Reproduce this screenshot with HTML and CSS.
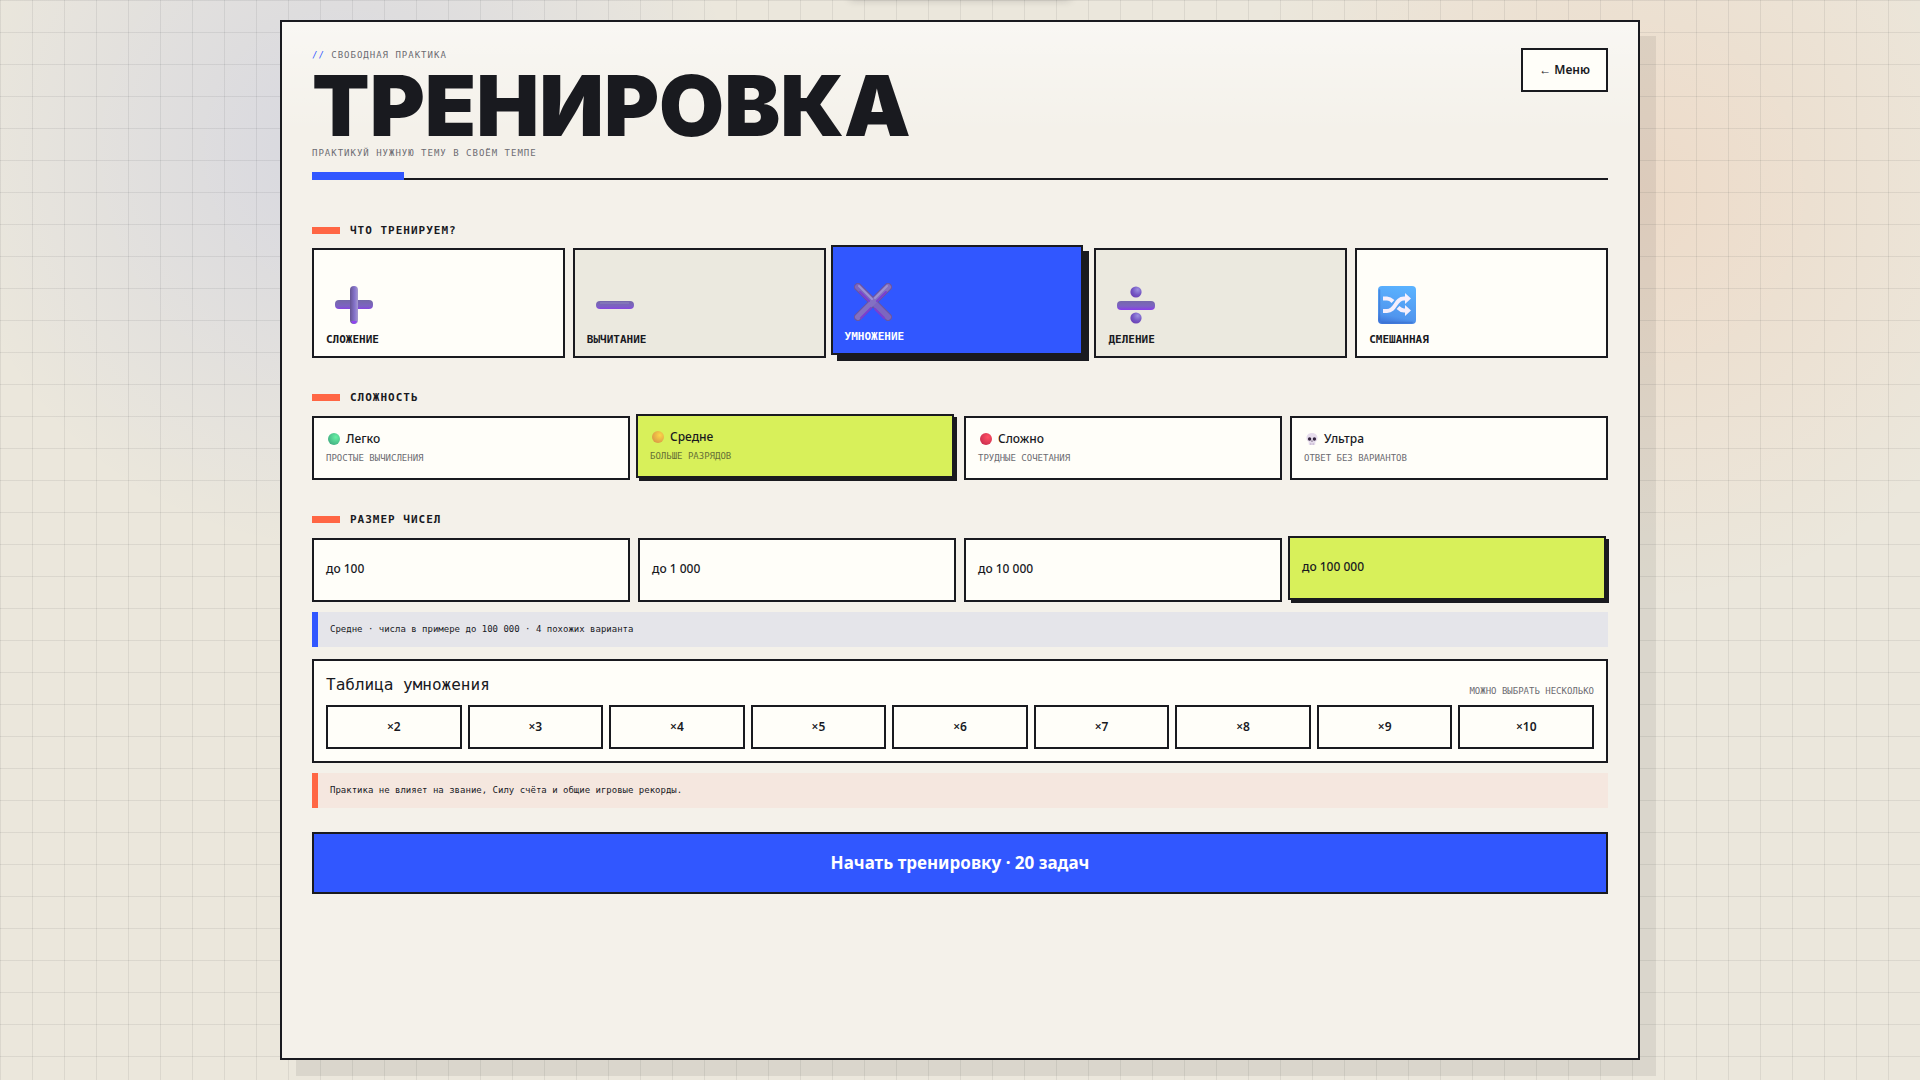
FILE: index.html
```html
<!DOCTYPE html>
<html lang="ru">
<head>
    <meta charset="UTF-8">
    <meta name="viewport" content="width=device-width, initial-scale=1.0">
    <title>Тренировка</title>
    <link rel="stylesheet" href="styles.css">
</head>
<body>
    <div class="toast" role="status"></div>

    <!-- Gradients shared by the icons -->
    <svg class="defs" width="0" height="0" aria-hidden="true">
        <defs>
            <linearGradient id="purple" gradientUnits="userSpaceOnUse" x1="0" y1="14" x2="0" y2="24">
                <stop offset="0" stop-color="#7468a8"/>
                <stop offset="0.6" stop-color="#7c63c0"/>
                <stop offset="1" stop-color="#8a3cec"/>
            </linearGradient>
            <linearGradient id="purpleV" x1="0" y1="0" x2="1" y2="0">
                <stop offset="0" stop-color="#655492"/>
                <stop offset="0.6" stop-color="#8674cc"/>
                <stop offset="1" stop-color="#a79bd0"/>
            </linearGradient>
            <radialGradient id="purpleDot" cx="0.65" cy="0.3" r="0.75">
                <stop offset="0" stop-color="#9c8fe0"/>
                <stop offset="0.6" stop-color="#7456c4"/>
                <stop offset="1" stop-color="#6a3fb4"/>
            </radialGradient>
            <linearGradient id="sky" x1="0.6" y1="0" x2="0.4" y2="1">
                <stop offset="0" stop-color="#5ab2ff"/>
                <stop offset="0.8" stop-color="#5196ee"/>
                <stop offset="1" stop-color="#3f78dc"/>
            </linearGradient>
            <radialGradient id="green" cx="0.65" cy="0.35" r="0.7">
                <stop offset="0" stop-color="#67f0a4"/>
                <stop offset="1" stop-color="#43b083"/>
            </radialGradient>
            <radialGradient id="yellow" cx="0.65" cy="0.35" r="0.7">
                <stop offset="0" stop-color="#fcd648"/>
                <stop offset="1" stop-color="#dc9a46"/>
            </radialGradient>
            <radialGradient id="red" cx="0.65" cy="0.35" r="0.7">
                <stop offset="0" stop-color="#ff5064"/>
                <stop offset="1" stop-color="#cc2f50"/>
            </radialGradient>
        </defs>
    </svg>

    <main class="panel">
        <header class="header">
            <div class="heading">
                <p class="eyebrow"><span class="slashes">//</span> Свободная практика</p>
                <h1>Тренировка</h1>
                <p class="subtitle">Практикуй нужную тему в своём темпе</p>
            </div>
            <button type="button" class="btn menu-btn">← Меню</button>
        </header>

        <section class="block">
            <h2>Что тренируем?</h2>
            <div class="topics">
                <button type="button" class="card topic">
                    <svg class="topic-icon" viewBox="0 0 38 38" aria-hidden="true">
                        <rect x="0" y="14" width="38" height="9" rx="4" fill="url(#purple)"/>
                        <rect x="15" y="0" width="8" height="38" rx="4" fill="url(#purpleV)"/>
                        <path d="M16 35h6q-1 3-3 3t-3-3z" fill="#8f45f0"/>
                    </svg>
                    <span>Сложение</span>
                </button>
                <button type="button" class="card topic">
                    <svg class="topic-icon" viewBox="0 0 38 38" aria-hidden="true">
                        <rect x="0" y="15" width="38" height="8" rx="4" fill="url(#purple)"/>
                        <path d="M4 17h29" stroke="#8d86bd" stroke-width="1"/>
                    </svg>
                    <span>Вычитание</span>
                </button>
                <button type="button" class="card topic selected" aria-pressed="true">
                    <svg class="topic-icon" viewBox="0 0 38 38" aria-hidden="true">
                        <path d="M4 4l30 30M34 4L4 34" stroke="#6a569f" stroke-width="8" stroke-linecap="round"/>
                        <path d="M4 4l30 30" stroke="#7c66c0" stroke-width="6" stroke-linecap="round"/>
                        <path d="M34 4L4 34" stroke="#8470c2" stroke-width="6" stroke-linecap="round"/>
                        <path d="M7 35l10-10M21 26l9 9M6 9l9 9M23 18l9-9" stroke="#7a3fd0" stroke-width="2" stroke-linecap="round"/>
                        <path d="M5 3l13 13M33 3L21 15" stroke="#9b92d2" stroke-width="2" stroke-linecap="round"/>
                    </svg>
                    <span>Умножение</span>
                </button>
                <button type="button" class="card topic">
                    <svg class="topic-icon" viewBox="0 0 38 38" aria-hidden="true">
                        <rect x="0" y="15" width="38" height="9" rx="4" fill="url(#purple)"/>
                        <circle cx="19" cy="6" r="5.600" fill="url(#purpleDot)"/>
                        <circle cx="19" cy="32" r="5.600" fill="url(#purpleDot)"/>
                    </svg>
                    <span>Деление</span>
                </button>
                <button type="button" class="card topic">
                    <svg class="topic-icon" viewBox="0 0 38 38" aria-hidden="true">
                        <rect width="38" height="38" rx="4" fill="url(#sky)"/>
                        <path d="M1.500 4v30M4 36.500h30" stroke="#3c72cf" stroke-width="1.500" stroke-linecap="round" opacity=".6"/>
                        <path d="M5 12.500h4q3 0 6 3M5 25h4c9 0 8-12.500 17-12.500h2M20 21.500q3 3 6 3h2" stroke="#f6effc" stroke-width="4" fill="none"/>
                        <path d="M27 7l6 5.500-6 5.500zM27 19l6 5.500-6 5.500z" fill="#f6effc"/>
                    </svg>
                    <span>Смешанная</span>
                </button>
            </div>
        </section>

        <section class="block">
            <h2>Сложность</h2>
            <div class="options">
                <button type="button" class="card option">
                    <span class="option-name"><svg class="dot" viewBox="0 0 12 12" aria-hidden="true"><circle cx="6" cy="6" r="6" fill="url(#green)"/></svg>Легко</span>
                    <small>Простые вычисления</small>
                </button>
                <button type="button" class="card option selected" aria-pressed="true">
                    <span class="option-name"><svg class="dot" viewBox="0 0 12 12" aria-hidden="true"><circle cx="6" cy="6" r="6" fill="url(#yellow)"/></svg>Средне</span>
                    <small>Больше разрядов</small>
                </button>
                <button type="button" class="card option">
                    <span class="option-name"><svg class="dot" viewBox="0 0 12 12" aria-hidden="true"><circle cx="6" cy="6" r="6" fill="url(#red)"/></svg>Сложно</span>
                    <small>Трудные сочетания</small>
                </button>
                <button type="button" class="card option">
                    <span class="option-name"><svg class="dot" viewBox="0 0 12 12" aria-hidden="true">
                        <path d="M6 0C2.500 0 .5 2.200.5 5c0 2 .8 3.200 2.200 3.600V11q0 1 1 1h4.600q1 0 1-1V8.600C10.700 8.200 11.500 7 11.500 5 11.500 2.200 9.500 0 6 0z" fill="#e6dcec"/>
                        <circle cx="3.600" cy="6" r="1.700" fill="#33243d"/>
                        <circle cx="8.400" cy="6" r="1.700" fill="#33243d"/>
                        <path d="M6 7l.8 1.500H5.200z" fill="#4b3a55"/>
                        <path d="M4.800 10v2M7.200 10v2" stroke="#b9a6c4" stroke-width=".7"/>
                    </svg>Ультра</span>
                    <small>Ответ без вариантов</small>
                </button>
            </div>
        </section>

        <section class="block">
            <h2>Размер чисел</h2>
            <div class="options">
                <button type="button" class="card option">до 100</button>
                <button type="button" class="card option">до 1 000</button>
                <button type="button" class="card option">до 10 000</button>
                <button type="button" class="card option selected" aria-pressed="true">до 100 000</button>
            </div>
        </section>

        <p class="note">Средне · числа в примере до 100 000 · 4 похожих варианта</p>

        <section class="tables">
            <div class="tables-head">
                <h3>Таблица умножения</h3>
                <small>Можно выбрать несколько</small>
            </div>
            <div class="tables-grid">
                <button type="button" class="btn">×2</button>
                <button type="button" class="btn">×3</button>
                <button type="button" class="btn">×4</button>
                <button type="button" class="btn">×5</button>
                <button type="button" class="btn">×6</button>
                <button type="button" class="btn">×7</button>
                <button type="button" class="btn">×8</button>
                <button type="button" class="btn">×9</button>
                <button type="button" class="btn">×10</button>
            </div>
        </section>

        <p class="note note-warn">Практика не влияет на звание, Силу счёта и общие игровые рекорды.</p>

        <button type="button" class="start-btn">Начать тренировку · 20 задач</button>
    </main>
</body>
</html>
```
FILE: styles.css
```css
:root {
    --ink: #191a1f;
    --paper: #f4f1ea;
    --card: #fffef9;
    --muted: #6c6c72;
    --blue: #3157ff;
    --orange: #ff6644;
    --lime: #d8f05a;
    --mono: "DejaVu Sans Mono", monospace;
    --sans: "Noto Sans", sans-serif;
}

* {
    box-sizing: border-box;
}

body {
    margin: 0;
    padding: 20px;
    min-height: 100vh;
    color: var(--ink);
    font-family: var(--mono);
    background:
        linear-gradient(rgba(25, 26, 31, 0.08) 1px, transparent 1px) 0 0 / 32px 32px,
        linear-gradient(90deg, rgba(25, 26, 31, 0.08) 1px, transparent 1px) 0 0 / 32px 32px,
        radial-gradient(circle at 18% 14%, rgba(49, 87, 255, 0.11), transparent 22%),
        radial-gradient(circle at 85% 18%, rgba(255, 136, 70, 0.13), transparent 22%),
        #ebe7dc;
}

h1, h2, h3, p {
    margin: 0;
}

button {
    color: inherit;
    font-family: var(--sans);
    cursor: pointer;
}

.defs {
    position: absolute;
}

.toast {
    position: absolute;
    bottom: 100%;
    left: 50%;
    width: 220px;
    height: 40px;
    transform: translateX(-50%);
    box-shadow: 0 0 8px rgba(25, 26, 31, 0.2);
}

.panel {
    max-width: 1360px;
    min-height: calc(100vh - 40px);
    margin: 0 auto;
    padding: 26px 30px;
    border: 2px solid var(--ink);
    background: linear-gradient(rgba(255, 255, 255, 0.45), transparent 110px) var(--paper);
    box-shadow: 16px 16px 0 rgba(25, 26, 31, 0.08);
}

.header {
    position: relative;
    display: flex;
    justify-content: space-between;
    align-items: flex-start;
    margin-bottom: 42px;
    padding-bottom: 17px;
    border-bottom: 2px solid var(--ink);
}

.header::after {
    content: "";
    position: absolute;
    left: 0;
    bottom: -2px;
    width: 92px;
    height: 8px;
    background: var(--blue);
}

.eyebrow,
.subtitle {
    color: var(--muted);
    font-size: 9px;
    line-height: 15px;
    letter-spacing: 1px;
    text-transform: uppercase;
}

.slashes {
    color: var(--blue);
}

h1 {
    margin-top: 3px;
    font-family: Inter, sans-serif;
    font-size: 84px;
    font-weight: 900;
    line-height: 80px;
    text-transform: uppercase;
}

.btn {
    height: 44px;
    padding: 0 16px 2px;
    border: 2px solid var(--ink);
    background: var(--card);
    font-size: 12px;
    font-weight: 600;
}

.block {
    margin-bottom: 31px;
}

h2 {
    display: flex;
    align-items: center;
    gap: 10px;
    margin-bottom: 10px;
    font-size: 11px;
    line-height: 17px;
    letter-spacing: 1px;
    text-transform: uppercase;
}

.header + .block h2 {
    margin-bottom: 9px;
}

h2::before {
    content: "";
    width: 28px;
    height: 7px;
    background: var(--orange);
}

.topics,
.options {
    display: grid;
    gap: 8px;
}

.topics {
    grid-template-columns: repeat(5, 1fr);
}

.options {
    grid-template-columns: repeat(4, 1fr);
}

.card {
    display: flex;
    flex-direction: column;
    align-items: flex-start;
    padding: 11px 12px;
    border: 2px solid var(--ink);
    background: var(--card);
    text-align: left;
}

.topic {
    justify-content: flex-end;
    gap: 10px;
    height: 110px;
    font-family: var(--mono);
    font-size: 11px;
    font-weight: bold;
    line-height: 11px;
    text-transform: uppercase;
}

.topic:nth-child(even) {
    background: #ebe9df;
}

.topic-icon {
    width: 38px;
    height: 38px;
    margin-left: 9px;
}

.topic.selected {
    color: #fff;
    background: var(--blue);
    box-shadow: 6px 6px 0 var(--ink);
    transform: translate(-3px, -3px);
}

.option {
    justify-content: center;
    gap: 5px;
    height: 64px;
    padding-bottom: 13px;
    font-size: 12px;
    font-weight: 500;
    line-height: 16px;
}

.option-name {
    display: flex;
    align-items: center;
    gap: 6px;
    margin-left: 2px;
}

.dot {
    width: 12px;
    height: 12px;
}

.option.selected {
    background: var(--lime);
    box-shadow: 3px 3px 0 var(--ink);
    transform: translate(-2px, -2px);
}

small {
    color: var(--muted);
    font-family: var(--mono);
    font-size: 9px;
    font-weight: normal;
    line-height: 12px;
    text-transform: uppercase;
}

.option.selected small {
    color: #667036;
}

.note {
    margin-top: 10px;
    padding: 10px 12px;
    border-left: 6px solid var(--blue);
    background: #e5e5ea;
    font-size: 9px;
    line-height: 15px;
}

.block + .note {
    margin-top: -21px;
}

.note-warn {
    border-color: var(--orange);
    background: #f5e7df;
}

.tables {
    margin-top: 12px;
    padding: 12px;
    border: 2px solid var(--ink);
    background: var(--card);
}

.tables-head {
    display: flex;
    justify-content: space-between;
    align-items: flex-end;
    margin-bottom: 8px;
}

h3 {
    font-size: 16px;
    font-weight: normal;
    line-height: 24px;
}

.tables-grid {
    display: grid;
    grid-template-columns: repeat(9, 1fr);
    gap: 6px;
}

.start-btn {
    width: 100%;
    height: 62px;
    margin-top: 24px;
    padding-bottom: 3px;
    border: 2px solid var(--ink);
    color: #fff;
    background: var(--blue);
    font-size: 17px;
    font-weight: bold;
}
```
